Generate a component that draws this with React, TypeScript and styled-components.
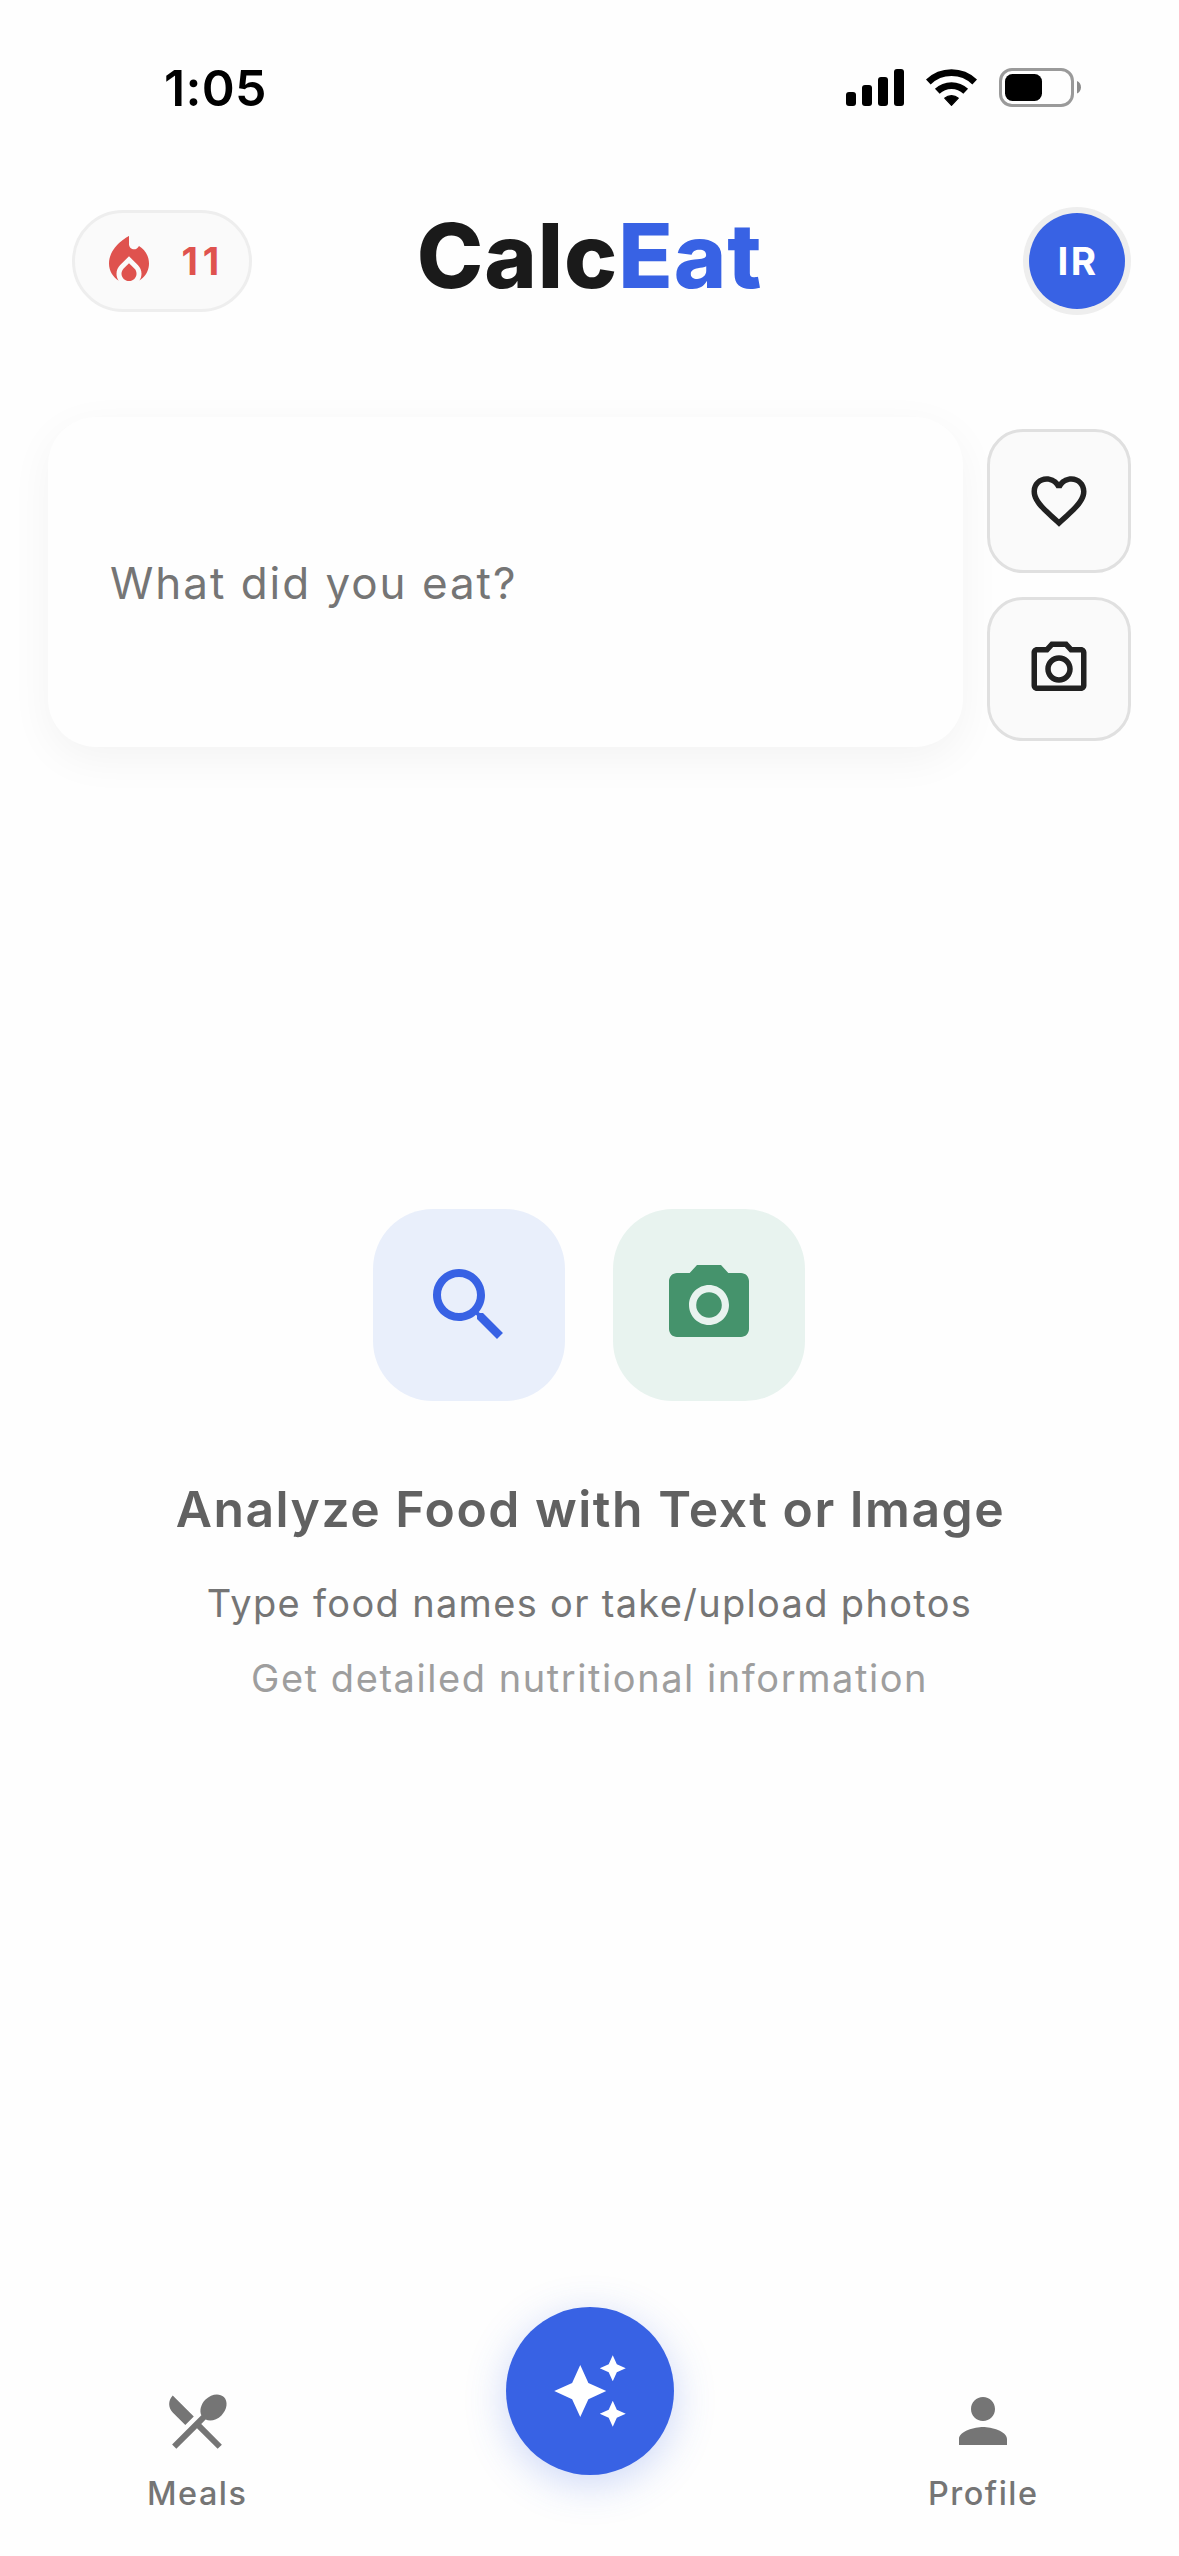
import React from 'react';
import styled, { createGlobalStyle } from 'styled-components';

const color = {
  page: '#fefefe',
  ink: '#1a1a1a',
  primary: '#3862e4',
  flame: '#df524e',
  green: '#45936c',
  surface: '#fafafa',
  hairline: '#eeeeee',
  border: '#e0e0e0',
  title: '#616161',
  muted: '#757575',
  faint: '#9e9e9e',
};

const GlobalStyle = createGlobalStyle`
  *, *::before, *::after { box-sizing: border-box; }
  body {
    margin: 0;
    background: ${color.page};
    font-family: Inter, "Liberation Sans", sans-serif;
    -webkit-font-smoothing: antialiased;
  }
  button { font: inherit; padding: 0; cursor: pointer; }
  svg { display: block; flex: none; }
`;

const Screen = styled.div`
  display: flex;
  flex-direction: column;
  width: 1179px;
  height: 2556px;
  overflow: hidden;
  background: ${color.page};
`;

const StatusBar = styled.div`
  display: flex;
  justify-content: space-between;
  align-items: flex-start;
  height: 177px;
  padding: 58px 98px 0 164px;
  color: #000;
`;

const Clock = styled.span`
  font-size: 50px;
  font-weight: 600;
  line-height: 60px;
  letter-spacing: 0.3px;
`;

const StatusIcons = styled.div`
  display: flex;
  align-items: center;
  gap: 22px;
  height: 39px;
  margin-top: 10px;
`;

const Header = styled.header`
  display: grid;
  grid-template-columns: 1fr auto 1fr;
  align-items: center;
  height: 168px;
  padding: 0 48px;
`;

const Streak = styled.div`
  display: flex;
  align-items: center;
  gap: 22.5px;
  width: 180px;
  height: 102px;
  margin-left: 24px;
  padding-left: 24px;
  border: 3px solid ${color.hairline};
  border-radius: 51px;
  background: ${color.surface};
  color: ${color.flame};
`;

const StreakCount = styled.span`
  font-size: 38.2px;
  font-weight: 700;
  line-height: 48px;
  letter-spacing: 4.9px;
`;

const Logo = styled.h1`
  margin: 0 0 10px;
  font-size: 89.5px;
  font-weight: 800;
  line-height: 108px;
  letter-spacing: 0.9px;
  color: ${color.ink};
`;

const LogoAccent = styled.span`
  color: ${color.primary};
`;

const Avatar = styled.button`
  justify-self: end;
  display: flex;
  align-items: center;
  justify-content: center;
  width: 108px;
  height: 108px;
  border: 0;
  border-radius: 50%;
  background: ${color.hairline};
`;

const AvatarFace = styled.span`
  display: flex;
  align-items: center;
  justify-content: center;
  width: 96px;
  height: 96px;
  padding-left: 2px;
  border-radius: 50%;
  background: ${color.primary};
  color: #fff;
  font-size: 38.6px;
  font-weight: 650;
  line-height: 48px;
  letter-spacing: 2.4px;
`;

const Composer = styled.section`
  display: flex;
  align-items: flex-start;
  gap: 24px;
  padding: 72px 48px 0;
`;

const FoodField = styled.div`
  flex: 1;
  display: flex;
  align-items: center;
  height: 330px;
  padding: 2px 62px 0;
  border-radius: 48px;
  background: ${color.page};
  box-shadow: 0 12px 44px rgba(0, 0, 0, 0.048);
`;

const Placeholder = styled.span`
  font-size: 44px;
  line-height: 60px;
  letter-spacing: 1.96px;
  color: ${color.muted};
`;

const Actions = styled.div`
  display: flex;
  flex-direction: column;
  gap: 24px;
  margin-top: 12px;
`;

const ActionButton = styled.button`
  display: flex;
  align-items: center;
  justify-content: center;
  width: 144px;
  height: 144px;
  border: 3px solid ${color.border};
  border-radius: 36px;
  background: ${color.surface};
  color: #212121;
`;

const EmptyState = styled.main`
  flex: 1;
  display: flex;
  flex-direction: column;
  align-items: center;
  padding-top: 462px;
`;

const Tiles = styled.div`
  display: flex;
  gap: 48px;
  margin: 0 1px 78px 0;
`;

const Tile = styled.div<{ $bg: string; $fg: string }>`
  display: flex;
  align-items: center;
  justify-content: center;
  width: 192px;
  height: 192px;
  border-radius: 60px;
  background: ${(p) => p.$bg};
  color: ${(p) => p.$fg};
`;

const Title = styled.h2`
  margin: 0 0 27px;
  padding-left: 2px;
  font-size: 49.8px;
  font-weight: 600;
  line-height: 60px;
  letter-spacing: 1.54px;
  color: ${color.title};
`;

const Hint = styled.p<{ $color: string; $spacing: number }>`
  margin: 0;
  font-size: 38px;
  line-height: 75px;
  letter-spacing: ${(p) => p.$spacing}px;
  color: ${(p) => p.$color};
`;

const Nav = styled.nav`
  display: grid;
  grid-template-columns: repeat(3, 1fr);
  justify-items: center;
  align-items: start;
  height: 249px;
`;

const NavItem = styled.button`
  display: flex;
  flex-direction: column;
  align-items: center;
  gap: 16px;
  margin-top: 78px;
  border: 0;
  background: none;
  color: ${color.muted};
`;

const NavLabel = styled.span`
  padding-left: 1.5px;
  font-size: 32.4px;
  font-weight: 450;
  line-height: 42px;
  letter-spacing: 1.5px;
`;

const Fab = styled.button`
  display: flex;
  align-items: center;
  justify-content: center;
  width: 168px;
  height: 168px;
  border: 0;
  border-radius: 50%;
  background: ${color.primary};
  color: #fff;
  box-shadow: 0 9px 40px rgba(56, 98, 228, 0.25);
`;

const paths = {
  fire: [
    'm12 12.9-2.13 2.09c-.56.56-.87 1.29-.87 2.07C9 18.68 10.35 20 12 20s3-1.32 3-2.94c0-.78-.31-1.52-.87-2.07L12 12.9z',
    'm16 6-.44.55C14.38 8.02 12 7.19 12 5.3V2S4 6 4 13c0 2.92 1.56 5.47 3.89 6.86-.56-.79-.89-1.76-.89-2.8 0-1.32.52-2.56 1.47-3.5L12 10.1l3.53 3.47c.95.93 1.47 2.17 1.47 3.5 0 1.02-.31 1.96-.85 2.75 1.89-1.15 3.29-3.06 3.71-5.3.66-3.55-1.07-6.9-3.86-8.52z',
  ],
  heart: [
    'M16.5 3c-1.74 0-3.41.81-4.5 2.09C10.91 3.81 9.24 3 7.5 3 4.42 3 2 5.42 2 8.5c0 3.78 3.4 6.86 8.55 11.54L12 21.35l1.45-1.32C18.6 15.36 22 12.28 22 8.5 22 5.42 19.58 3 16.5 3zm-4.4 15.55-.1.1-.1-.1C7.14 14.24 4 11.39 4 8.5 4 6.5 5.5 5 7.5 5c1.54 0 3.04.99 3.57 2.36h1.87C13.46 5.99 14.96 5 16.5 5c2 0 3.5 1.5 3.5 3.5 0 2.89-3.14 5.74-7.9 10.05z',
  ],
  cameraOutline: [
    'M20 4h-3.17L15 2H9L7.17 4H4c-1.1 0-2 .9-2 2v12c0 1.1.9 2 2 2h16c1.1 0 2-.9 2-2V6c0-1.1-.9-2-2-2zm0 14H4V6h4.05l1.83-2h4.24l1.83 2H20v12zM12 7c-2.76 0-5 2.24-5 5s2.24 5 5 5 5-2.24 5-5-2.24-5-5-5zm0 8c-1.65 0-3-1.35-3-3s1.35-3 3-3 3 1.35 3 3-1.35 3-3 3z',
  ],
  search: [
    'M15.5 14h-.79l-.28-.27C15.41 12.59 16 11.11 16 9.5 16 5.91 13.09 3 9.5 3S3 5.91 3 9.5 5.91 16 9.5 16c1.61 0 3.09-.59 4.23-1.57l.27.28v.79l5 4.99L20.49 19l-4.99-5zm-6 0C7.01 14 5 11.99 5 9.5S7.01 5 9.5 5 14 7.01 14 9.5 11.99 14 9.5 14z',
  ],
  camera: [
    'M12 8.8a3.2 3.2 0 1 0 0 6.4 3.2 3.2 0 1 0 0-6.4z',
    'M9 2 7.17 4H4c-1.1 0-2 .9-2 2v12c0 1.1.9 2 2 2h16c1.1 0 2-.9 2-2V6c0-1.1-.9-2-2-2h-3.17L15 2H9zm3 15c-2.76 0-5-2.24-5-5s2.24-5 5-5 5 2.24 5 5-2.24 5-5 5z',
  ],
  sparkles: [
    'm19 9 1.25-2.75L23 5l-2.75-1.25L19 1l-1.25 2.75L15 5l2.75 1.25L19 9zm-7.5.5L9 4 6.5 9.5 1 12l5.5 2.5L9 20l2.5-5.5L17 12l-5.5-2.5zM19 15l-1.25 2.75L15 19l2.75 1.25L19 23l1.25-2.75L23 19l-2.75-1.25L19 15z',
  ],
  meals: [
    'm8.1 13.34 2.83-2.83L3.91 3.5c-1.56 1.56-1.56 4.09 0 5.66l4.19 4.18zm6.78-1.81c1.53.71 3.68.21 5.27-1.38 1.91-1.91 2.28-4.65.81-6.12-1.46-1.46-4.2-1.1-6.12.81-1.59 1.59-2.09 3.74-1.38 5.27L3.7 19.87l1.41 1.41L12 14.41l6.88 6.88 1.41-1.41L13.41 13l1.47-1.47z',
  ],
  person: [
    'M12 12c2.21 0 4-1.79 4-4s-1.79-4-4-4-4 1.79-4 4 1.79 4 4 4zm0 2c-2.67 0-8 1.34-8 4v2h16v-2c0-2.66-5.33-4-8-4z',
  ],
};

function Icon({ name, size }: { name: keyof typeof paths; size: number }) {
  return (
    <svg width={size} height={size} viewBox="0 0 24 24" fill="currentColor" aria-hidden="true">
      {paths[name].map((d) => (
        <path key={d} d={d} />
      ))}
    </svg>
  );
}

function SignalIcon() {
  return (
    <svg width="58" height="37" viewBox="0 0 58 37" fill="currentColor">
      <rect x="0" y="23" width="10" height="14" rx="3" />
      <rect x="16" y="16" width="10" height="21" rx="3" />
      <rect x="32" y="8" width="10" height="29" rx="3" />
      <rect x="48" y="0" width="10" height="37" rx="3" />
    </svg>
  );
}

function WifiIcon() {
  return (
    <svg width="51" height="37" viewBox="-0.5 0 51 37" fill="none" stroke="currentColor">
      <path d="M1.8 13A33.4 33.4 0 0 1 48.2 13" strokeWidth="6.8" />
      <path d="M10.8 22.3A20.5 20.5 0 0 1 39.2 22.3" strokeWidth="6.8" />
      <path
        d="M25 36.3 18.2 29.1A10.6 10.6 0 0 1 31.8 29.1Z"
        fill="currentColor"
        strokeWidth="1.2"
        strokeLinejoin="round"
      />
    </svg>
  );
}

function BatteryIcon() {
  return (
    <svg width="82" height="39" viewBox="0 0 82 39">
      <rect x="1.5" y="1.5" width="72" height="36" rx="11.5" fill="none" stroke="#9a9a9a" strokeWidth="3" />
      <rect x="6" y="6" width="37" height="27" rx="7.5" fill="#000" />
      <path d="M78 13c2.6 1.2 4 3.6 4 6.3s-1.4 5.1-4 6.3z" fill="#8c8c8c" />
    </svg>
  );
}

export default function App() {
  return (
    <>
      <GlobalStyle />
      <Screen>
        <StatusBar>
          <Clock>1:05</Clock>
          <StatusIcons>
            <SignalIcon />
            <WifiIcon />
            <BatteryIcon />
          </StatusIcons>
        </StatusBar>

        <Header>
          <Streak>
            <Icon name="fire" size={60} />
            <StreakCount>11</StreakCount>
          </Streak>
          <Logo>
            Calc<LogoAccent>Eat</LogoAccent>
          </Logo>
          <Avatar>
            <AvatarFace>IR</AvatarFace>
          </Avatar>
        </Header>

        <Composer>
          <FoodField>
            <Placeholder>What did you eat?</Placeholder>
          </FoodField>
          <Actions>
            <ActionButton aria-label="Favorites">
              <Icon name="heart" size={66} />
            </ActionButton>
            <ActionButton aria-label="Take photo">
              <Icon name="cameraOutline" size={66} />
            </ActionButton>
          </Actions>
        </Composer>

        <EmptyState>
          <Tiles>
            <Tile $bg="#e9effb" $fg={color.primary}>
              <Icon name="search" size={96} />
            </Tile>
            <Tile $bg="#e8f3ef" $fg={color.green}>
              <Icon name="camera" size={96} />
            </Tile>
          </Tiles>
          <Title>Analyze Food with Text or Image</Title>
          <Hint $color={color.muted} $spacing={1.32}>
            Type food names or take/upload photos
          </Hint>
          <Hint $color={color.faint} $spacing={1.56}>
            Get detailed nutritional information
          </Hint>
        </EmptyState>

        <Nav>
          <NavItem>
            <Icon name="meals" size={72} />
            <NavLabel>Meals</NavLabel>
          </NavItem>
          <Fab aria-label="Analyze">
            <Icon name="sparkles" size={78} />
          </Fab>
          <NavItem>
            <Icon name="person" size={72} />
            <NavLabel>Profile</NavLabel>
          </NavItem>
        </Nav>
      </Screen>
    </>
  );
}
